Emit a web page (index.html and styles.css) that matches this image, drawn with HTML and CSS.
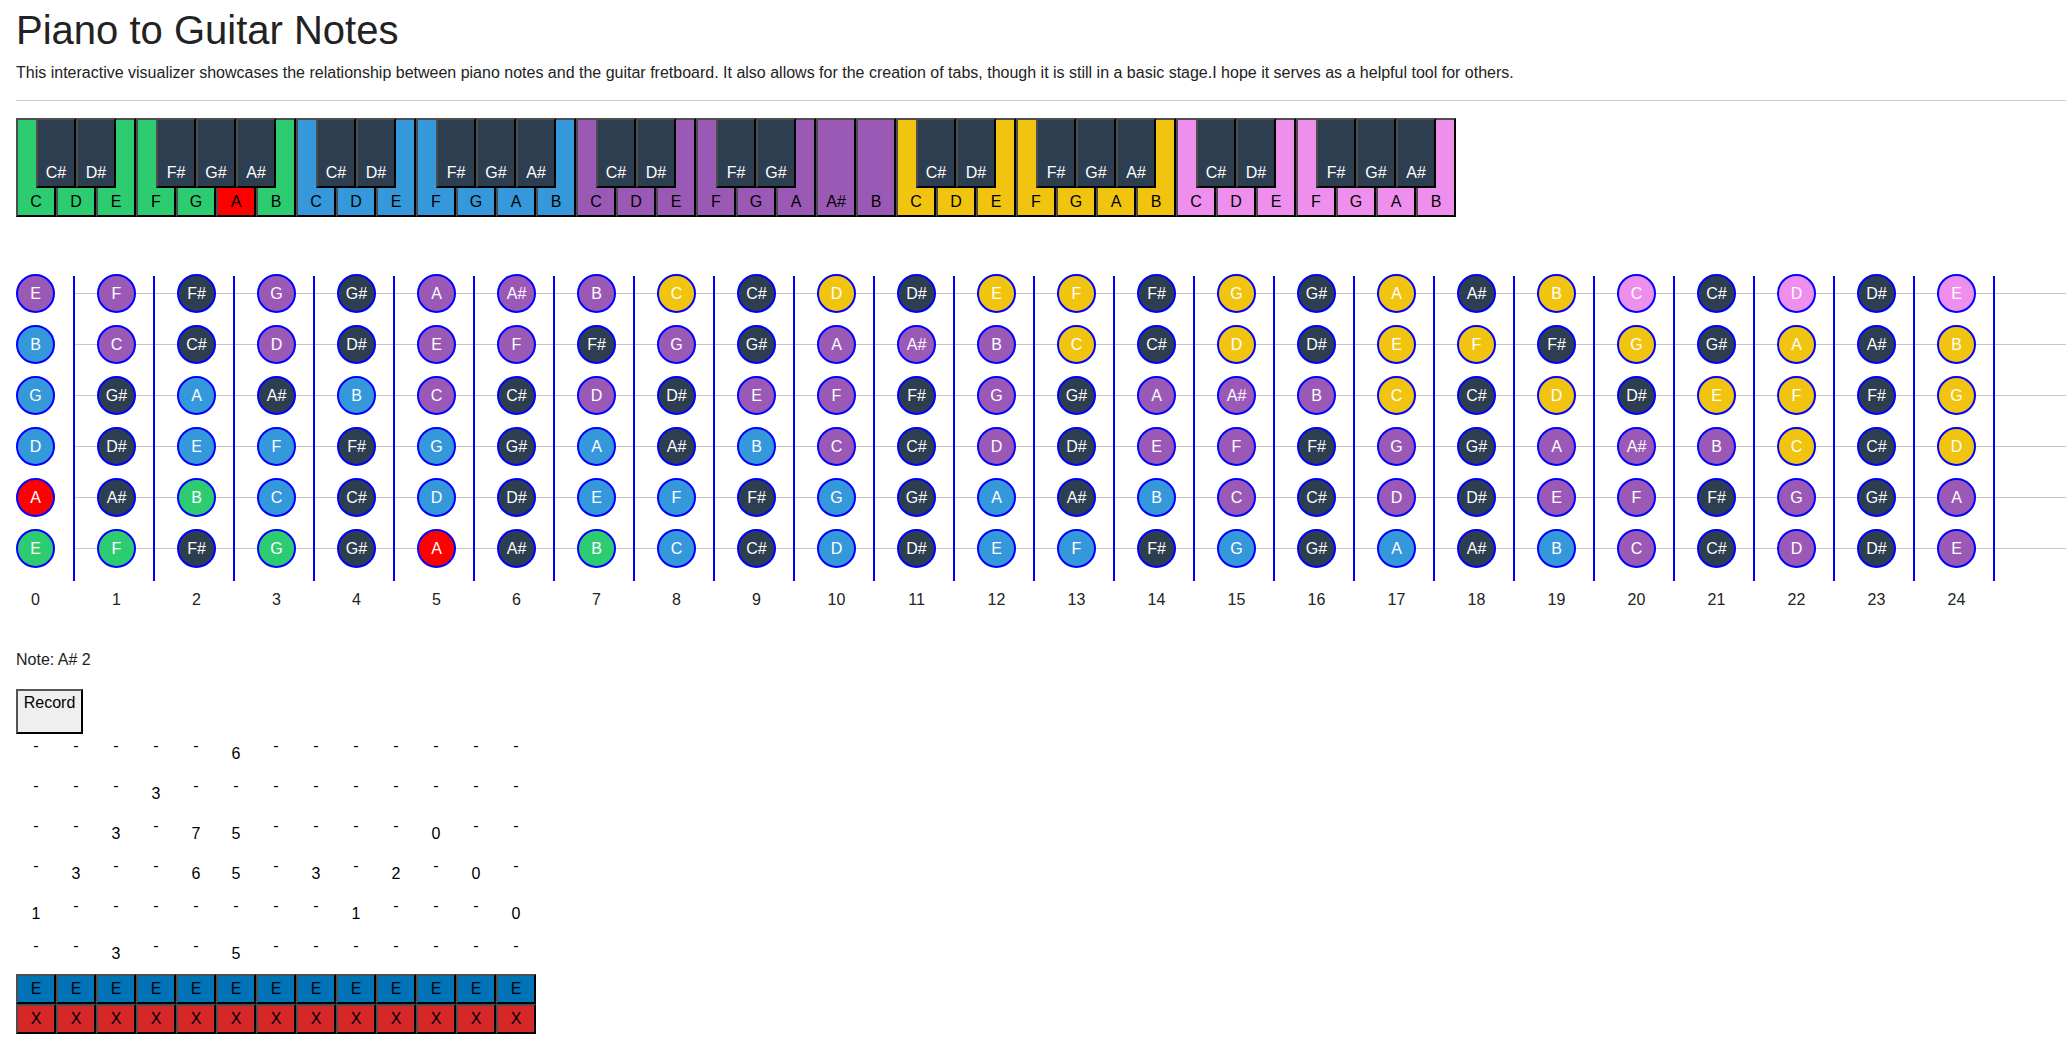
FILE: index.html
```html
<!DOCTYPE html>
<html lang="en">
<head>
<meta charset="utf-8">
<title>Piano to Guitar Notes</title>
<link rel="stylesheet" href="styles.css">
</head>
<body>
<h1 class="title">Piano to Guitar Notes</h1>
<p class="intro">This interactive visualizer showcases the relationship between piano notes and the guitar fretboard. It also allows for the creation of tabs, though it is still in a basic stage.I hope it serves as a helpful tool for others.</p>
<div class="rule"></div>

<div class="piano">
  <div class="key g">C</div><div class="key k">C#</div><div class="key g">D</div><div class="key k">D#</div><div class="key g">E</div><div class="key g">F</div><div class="key k">F#</div><div class="key g">G</div><div class="key k">G#</div><div class="key r">A</div><div class="key k">A#</div><div class="key g">B</div>
  <div class="key b">C</div><div class="key k">C#</div><div class="key b">D</div><div class="key k">D#</div><div class="key b">E</div><div class="key b">F</div><div class="key k">F#</div><div class="key b">G</div><div class="key k">G#</div><div class="key b">A</div><div class="key k">A#</div><div class="key b">B</div>
  <div class="key p">C</div><div class="key k">C#</div><div class="key p">D</div><div class="key k">D#</div><div class="key p">E</div><div class="key p">F</div><div class="key k">F#</div><div class="key p">G</div><div class="key k">G#</div><div class="key p">A</div><div class="key p">A#</div><div class="key p">B</div>
  <div class="key y">C</div><div class="key k">C#</div><div class="key y">D</div><div class="key k">D#</div><div class="key y">E</div><div class="key y">F</div><div class="key k">F#</div><div class="key y">G</div><div class="key k">G#</div><div class="key y">A</div><div class="key k">A#</div><div class="key y">B</div>
  <div class="key m">C</div><div class="key k">C#</div><div class="key m">D</div><div class="key k">D#</div><div class="key m">E</div><div class="key m">F</div><div class="key k">F#</div><div class="key m">G</div><div class="key k">G#</div><div class="key m">A</div><div class="key k">A#</div><div class="key m">B</div>
</div>

<div class="fretboard">
  <div class="fret"><div class="dot p">E</div><div class="dot b">B</div><div class="dot b">G</div><div class="dot b">D</div><div class="dot r">A</div><div class="dot g">E</div></div>
  <div class="fret"><div class="dot p">F</div><div class="dot p">C</div><div class="dot k">G#</div><div class="dot k">D#</div><div class="dot k">A#</div><div class="dot g">F</div></div>
  <div class="fret"><div class="dot k">F#</div><div class="dot k">C#</div><div class="dot b">A</div><div class="dot b">E</div><div class="dot g">B</div><div class="dot k">F#</div></div>
  <div class="fret"><div class="dot p">G</div><div class="dot p">D</div><div class="dot k">A#</div><div class="dot b">F</div><div class="dot b">C</div><div class="dot g">G</div></div>
  <div class="fret"><div class="dot k">G#</div><div class="dot k">D#</div><div class="dot b">B</div><div class="dot k">F#</div><div class="dot k">C#</div><div class="dot k">G#</div></div>
  <div class="fret"><div class="dot p">A</div><div class="dot p">E</div><div class="dot p">C</div><div class="dot b">G</div><div class="dot b">D</div><div class="dot r">A</div></div>
  <div class="fret"><div class="dot p">A#</div><div class="dot p">F</div><div class="dot k">C#</div><div class="dot k">G#</div><div class="dot k">D#</div><div class="dot k">A#</div></div>
  <div class="fret"><div class="dot p">B</div><div class="dot k">F#</div><div class="dot p">D</div><div class="dot b">A</div><div class="dot b">E</div><div class="dot g">B</div></div>
  <div class="fret"><div class="dot y">C</div><div class="dot p">G</div><div class="dot k">D#</div><div class="dot k">A#</div><div class="dot b">F</div><div class="dot b">C</div></div>
  <div class="fret"><div class="dot k">C#</div><div class="dot k">G#</div><div class="dot p">E</div><div class="dot b">B</div><div class="dot k">F#</div><div class="dot k">C#</div></div>
  <div class="fret"><div class="dot y">D</div><div class="dot p">A</div><div class="dot p">F</div><div class="dot p">C</div><div class="dot b">G</div><div class="dot b">D</div></div>
  <div class="fret"><div class="dot k">D#</div><div class="dot p">A#</div><div class="dot k">F#</div><div class="dot k">C#</div><div class="dot k">G#</div><div class="dot k">D#</div></div>
  <div class="fret"><div class="dot y">E</div><div class="dot p">B</div><div class="dot p">G</div><div class="dot p">D</div><div class="dot b">A</div><div class="dot b">E</div></div>
  <div class="fret"><div class="dot y">F</div><div class="dot y">C</div><div class="dot k">G#</div><div class="dot k">D#</div><div class="dot k">A#</div><div class="dot b">F</div></div>
  <div class="fret"><div class="dot k">F#</div><div class="dot k">C#</div><div class="dot p">A</div><div class="dot p">E</div><div class="dot b">B</div><div class="dot k">F#</div></div>
  <div class="fret"><div class="dot y">G</div><div class="dot y">D</div><div class="dot p">A#</div><div class="dot p">F</div><div class="dot p">C</div><div class="dot b">G</div></div>
  <div class="fret"><div class="dot k">G#</div><div class="dot k">D#</div><div class="dot p">B</div><div class="dot k">F#</div><div class="dot k">C#</div><div class="dot k">G#</div></div>
  <div class="fret"><div class="dot y">A</div><div class="dot y">E</div><div class="dot y">C</div><div class="dot p">G</div><div class="dot p">D</div><div class="dot b">A</div></div>
  <div class="fret"><div class="dot k">A#</div><div class="dot y">F</div><div class="dot k">C#</div><div class="dot k">G#</div><div class="dot k">D#</div><div class="dot k">A#</div></div>
  <div class="fret"><div class="dot y">B</div><div class="dot k">F#</div><div class="dot y">D</div><div class="dot p">A</div><div class="dot p">E</div><div class="dot b">B</div></div>
  <div class="fret"><div class="dot m">C</div><div class="dot y">G</div><div class="dot k">D#</div><div class="dot p">A#</div><div class="dot p">F</div><div class="dot p">C</div></div>
  <div class="fret"><div class="dot k">C#</div><div class="dot k">G#</div><div class="dot y">E</div><div class="dot p">B</div><div class="dot k">F#</div><div class="dot k">C#</div></div>
  <div class="fret"><div class="dot m">D</div><div class="dot y">A</div><div class="dot y">F</div><div class="dot y">C</div><div class="dot p">G</div><div class="dot p">D</div></div>
  <div class="fret"><div class="dot k">D#</div><div class="dot k">A#</div><div class="dot k">F#</div><div class="dot k">C#</div><div class="dot k">G#</div><div class="dot k">D#</div></div>
  <div class="fret"><div class="dot m">E</div><div class="dot y">B</div><div class="dot y">G</div><div class="dot y">D</div><div class="dot p">A</div><div class="dot p">E</div></div>
</div>

<div class="fret-nums">
  <div class="num">0</div><div class="num">1</div><div class="num">2</div><div class="num">3</div><div class="num">4</div><div class="num">5</div><div class="num">6</div><div class="num">7</div><div class="num">8</div><div class="num">9</div><div class="num">10</div><div class="num">11</div><div class="num">12</div><div class="num">13</div><div class="num">14</div><div class="num">15</div><div class="num">16</div><div class="num">17</div><div class="num">18</div><div class="num">19</div><div class="num">20</div><div class="num">21</div><div class="num">22</div><div class="num">23</div><div class="num">24</div>
</div>

<p class="note">Note: A# 2</p>

<div class="record">Record</div>

<div class="tab">
  <div class="cell"><span class="dash">-</span></div><div class="cell"><span class="dash">-</span></div><div class="cell"><span class="dash">-</span></div><div class="cell"><span class="dash">-</span></div><div class="cell"><span class="dash">-</span></div><div class="cell">6</div><div class="cell"><span class="dash">-</span></div><div class="cell"><span class="dash">-</span></div><div class="cell"><span class="dash">-</span></div><div class="cell"><span class="dash">-</span></div><div class="cell"><span class="dash">-</span></div><div class="cell"><span class="dash">-</span></div><div class="cell"><span class="dash">-</span></div>

  <div class="cell"><span class="dash">-</span></div><div class="cell"><span class="dash">-</span></div><div class="cell"><span class="dash">-</span></div><div class="cell">3</div><div class="cell"><span class="dash">-</span></div><div class="cell"><span class="dash">-</span></div><div class="cell"><span class="dash">-</span></div><div class="cell"><span class="dash">-</span></div><div class="cell"><span class="dash">-</span></div><div class="cell"><span class="dash">-</span></div><div class="cell"><span class="dash">-</span></div><div class="cell"><span class="dash">-</span></div><div class="cell"><span class="dash">-</span></div>

  <div class="cell"><span class="dash">-</span></div><div class="cell"><span class="dash">-</span></div><div class="cell">3</div><div class="cell"><span class="dash">-</span></div><div class="cell">7</div><div class="cell">5</div><div class="cell"><span class="dash">-</span></div><div class="cell"><span class="dash">-</span></div><div class="cell"><span class="dash">-</span></div><div class="cell"><span class="dash">-</span></div><div class="cell">0</div><div class="cell"><span class="dash">-</span></div><div class="cell"><span class="dash">-</span></div>

  <div class="cell"><span class="dash">-</span></div><div class="cell">3</div><div class="cell"><span class="dash">-</span></div><div class="cell"><span class="dash">-</span></div><div class="cell">6</div><div class="cell">5</div><div class="cell"><span class="dash">-</span></div><div class="cell">3</div><div class="cell"><span class="dash">-</span></div><div class="cell">2</div><div class="cell"><span class="dash">-</span></div><div class="cell">0</div><div class="cell"><span class="dash">-</span></div>

  <div class="cell">1</div><div class="cell"><span class="dash">-</span></div><div class="cell"><span class="dash">-</span></div><div class="cell"><span class="dash">-</span></div><div class="cell"><span class="dash">-</span></div><div class="cell"><span class="dash">-</span></div><div class="cell"><span class="dash">-</span></div><div class="cell"><span class="dash">-</span></div><div class="cell">1</div><div class="cell"><span class="dash">-</span></div><div class="cell"><span class="dash">-</span></div><div class="cell"><span class="dash">-</span></div><div class="cell">0</div>

  <div class="cell"><span class="dash">-</span></div><div class="cell"><span class="dash">-</span></div><div class="cell">3</div><div class="cell"><span class="dash">-</span></div><div class="cell"><span class="dash">-</span></div><div class="cell">5</div><div class="cell"><span class="dash">-</span></div><div class="cell"><span class="dash">-</span></div><div class="cell"><span class="dash">-</span></div><div class="cell"><span class="dash">-</span></div><div class="cell"><span class="dash">-</span></div><div class="cell"><span class="dash">-</span></div><div class="cell"><span class="dash">-</span></div>

  <div class="btn edit">E</div><div class="btn edit">E</div><div class="btn edit">E</div><div class="btn edit">E</div><div class="btn edit">E</div><div class="btn edit">E</div><div class="btn edit">E</div><div class="btn edit">E</div><div class="btn edit">E</div><div class="btn edit">E</div><div class="btn edit">E</div><div class="btn edit">E</div><div class="btn edit">E</div>
  <div class="btn del">X</div><div class="btn del">X</div><div class="btn del">X</div><div class="btn del">X</div><div class="btn del">X</div><div class="btn del">X</div><div class="btn del">X</div><div class="btn del">X</div><div class="btn del">X</div><div class="btn del">X</div><div class="btn del">X</div><div class="btn del">X</div><div class="btn del">X</div>
</div>
</body>
</html>
```
FILE: styles.css
```css
* { box-sizing: border-box; }

body {
  margin: 0;
  padding: 0 16px;
  font-family: "Liberation Sans", Arial, sans-serif;
  color: #222;
  background: #fff;
}

.title {
  margin: 0;
  padding-top: 7px;
  font-size: 40px;
  font-weight: normal;
  line-height: 46px;
}

.intro {
  margin: 11px 0 0;
  font-size: 16px;
  line-height: 18px;
}

.rule {
  margin: 18px -16px 0 0;
  border-top: 1px solid #ccc;
}

/* piano */
.piano {
  display: flex;
  width: max-content;
  margin-top: 17px;
}

.key {
  width: 40px;
  height: 99px;
  display: flex;
  align-items: flex-end;
  justify-content: center;
  padding-bottom: 4px;
  border: 2px solid;
  border-color: #4d4d4d #000 #000 #4d4d4d;
  font-size: 16px;
  line-height: 18px;
  color: #000;
}

.key.k {
  height: 70px;
  margin: 0 -20px;
  z-index: 1;
  color: #fff;
}

.g { background: #2ecc71; }
.b { background: #3498db; }
.p { background: #9b59b6; }
.y { background: #f1c40f; }
.m { background: #ee8fee; }
.k { background: #2c3e50; }
.r { background: #ff0000; }

/* fretboard */
.fretboard {
  display: flex;
  margin: 59px -16px 0 0;
  background: repeating-linear-gradient(to bottom, transparent 0 17px, #c6c6c6 17px 18px, transparent 18px 51px);
}

.fret {
  display: flex;
  flex-direction: column;
  gap: 12px;
  padding: 0 17px 13px 22px;
  border-right: 2px solid #0000ff;
}

.fret:first-child {
  padding-left: 0;
  padding-right: 18px;
  background: #fff;
}

.dot {
  width: 39px;
  height: 39px;
  display: flex;
  align-items: center;
  justify-content: center;
  border: 2px solid #0000ff;
  border-radius: 50%;
  font-size: 16px;
  color: #fff;
}

.dot:first-child { margin-top: -2px; }

.fret-nums {
  display: flex;
  margin-top: 10px;
  font-size: 16px;
  line-height: 18px;
}

.num {
  width: 80px;
  padding: 0 19px 0 22px;
  text-align: center;
}

.num:first-child {
  width: 59px;
  padding: 0 20px 0 0;
}

.note {
  margin: 42px 0 0;
  font-size: 16px;
  line-height: 18px;
}

.record {
  width: 67px;
  height: 45px;
  margin-top: 20px;
  padding-top: 3px;
  border: 2px solid;
  border-color: #555 #000 #000 #555;
  background: #efefef;
  font-size: 16px;
  line-height: 18px;
  text-align: center;
  color: #000;
}

/* tab */
.tab {
  display: grid;
  grid-template-columns: repeat(13, 40px);
  font-size: 16px;
  line-height: 18px;
  color: #000;
}

.cell {
  height: 40px;
  display: flex;
  align-items: center;
  justify-content: center;
}

.dash { margin-bottom: 16px; }

.btn {
  height: 30px;
  display: flex;
  align-items: center;
  justify-content: center;
  border: 2px solid;
  border-color: #4d4d4d #000 #000 #4d4d4d;
  font-size: 16px;
  color: #000;
}

.edit { background: #0073b7; }
.del { background: #d62828; }
```
